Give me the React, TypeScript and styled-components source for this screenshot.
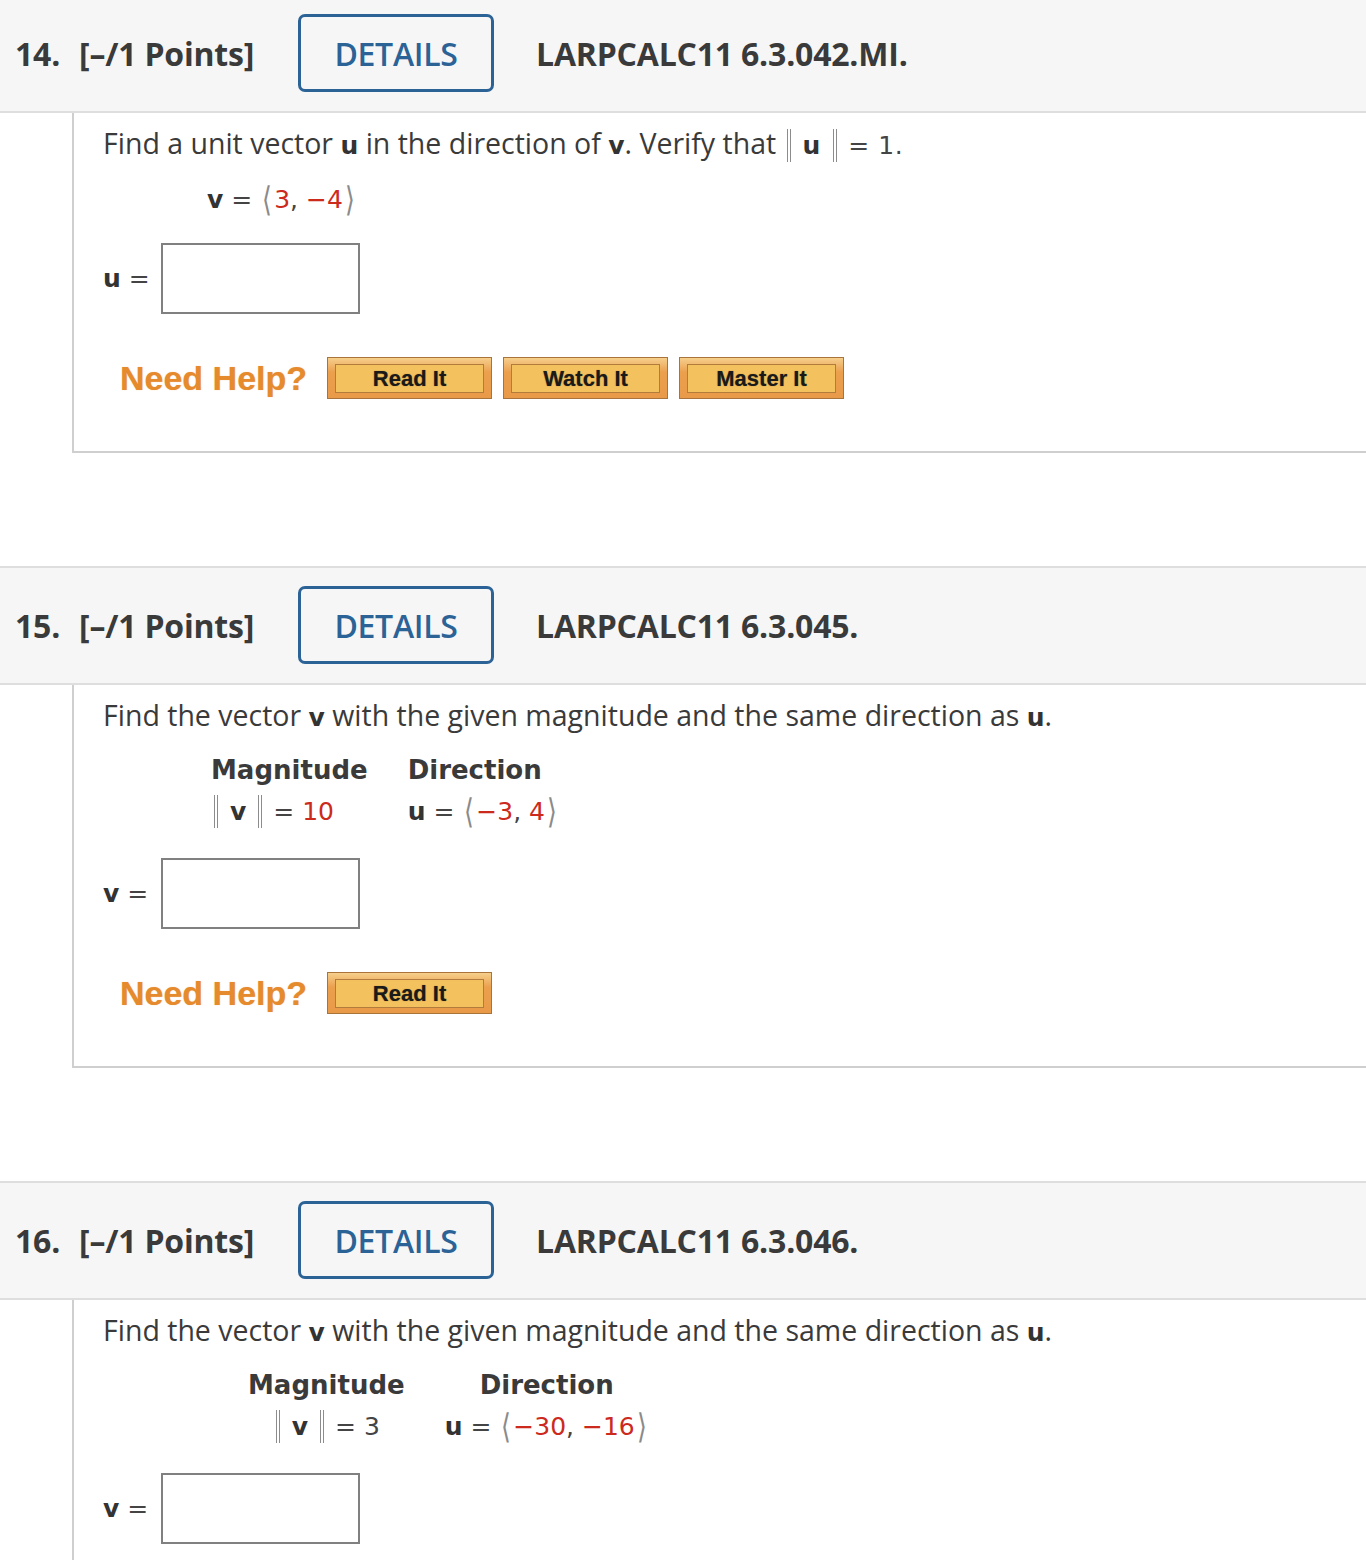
import React, { FC, ReactNode } from "react";
import styled, { createGlobalStyle } from "styled-components";

const GlobalStyle = createGlobalStyle`
  html, body {
    margin: 0;
    padding: 0;
    background: #ffffff;
    overflow: hidden;
  }
  body {
    font-family: "Open Sans", "DejaVu Sans", sans-serif;
    color: #3a3a3a;
  }
`;

interface HelpProps {
  buttons: string[];
}

const Vec: FC<{ children: ReactNode }> = ({ children }) => (
  <>
    <Angle>⟨</Angle>
    {children}
    <Angle>⟩</Angle>
  </>
);

const Help: FC<HelpProps> = ({ buttons }) => (
  <HelpRow>
    <NeedHelp>Need Help?</NeedHelp>
    {buttons.map((b) => (
      <HelpButton key={b}>
        <span>{b}</span>
      </HelpButton>
    ))}
  </HelpRow>
);

const QuestionHeader: FC<{ num: string; code: string }> = ({ num, code }) => (
  <Header>
    <Num>{num}</Num>
    <Points>[–/1 Points]</Points>
    <DetailsButton>DETAILS</DetailsButton>
    <Code>{code}</Code>
  </Header>
);

const App: FC = () => {
  return (
    <Page>
      <GlobalStyle />
      <Question>
        <QuestionHeader num="14." code="LARPCALC11 6.3.042.MI." />
        <Body>
          <Prompt>
            Find a unit vector <Var>u</Var> in the direction of <Var>v</Var>.
            Verify that{" "}
            <MathText>
              <Norm>
                <Var>u</Var>
              </Norm>{" "}
              = 1.
            </MathText>
          </Prompt>
          <VectorLine>
            <Var>v</Var> ={" "}
            <Vec>
              <Red>3</Red>, <Red>−4</Red>
            </Vec>
          </VectorLine>
          <AnswerRow gap={27}>
            <AnswerLabel>
              <Var>u</Var> =
            </AnswerLabel>
            <AnswerBox />
          </AnswerRow>
          <Help buttons={["Read It", "Watch It", "Master It"]} />
        </Body>
      </Question>

      <Question>
        <QuestionHeader num="15." code="LARPCALC11 6.3.045." />
        <Body>
          <Prompt>
            Find the vector <Var>v</Var> with the given magnitude and the same
            direction as <Var>u</Var>.
          </Prompt>
          <GivenTable indent={108} align="start">
            <ColHead>Magnitude</ColHead>
            <ColHead>Direction</ColHead>
            <Cell>
              <Norm>
                <Var>v</Var>
              </Norm>{" "}
              = <Red>10</Red>
            </Cell>
            <Cell>
              <Var>u</Var> ={" "}
              <Vec>
                <Red>−3</Red>, <Red>4</Red>
              </Vec>
            </Cell>
          </GivenTable>
          <AnswerRow gap={25}>
            <AnswerLabel>
              <Var>v</Var> =
            </AnswerLabel>
            <AnswerBox />
          </AnswerRow>
          <Help buttons={["Read It"]} />
        </Body>
      </Question>

      <Question>
        <QuestionHeader num="16." code="LARPCALC11 6.3.046." />
        <Body>
          <Prompt>
            Find the vector <Var>v</Var> with the given magnitude and the same
            direction as <Var>u</Var>.
          </Prompt>
          <GivenTable indent={145} align="center">
            <ColHead>Magnitude</ColHead>
            <ColHead>Direction</ColHead>
            <Cell>
              <Norm>
                <Var>v</Var>
              </Norm>{" "}
              = 3
            </Cell>
            <Cell>
              <Var>u</Var> ={" "}
              <Vec>
                <Red>−30</Red>, <Red>−16</Red>
              </Vec>
            </Cell>
          </GivenTable>
          <AnswerRow gap={25}>
            <AnswerLabel>
              <Var>v</Var> =
            </AnswerLabel>
            <AnswerBox />
          </AnswerRow>
          <Help buttons={["Read It"]} />
        </Body>
      </Question>
    </Page>
  );
};

const Page = styled.div`
  margin-top: -6px;
  width: 1366px;
`;
const Question = styled.section`
  margin-bottom: 113px;
`;
const Header = styled.div`
  display: flex;
  align-items: center;
  background: #f6f6f6;
  border-top: 2px solid #dedede;
  border-bottom: 2px solid #dedede;
  padding: 18px 0 19px 15px;
  font-family: "Open Sans", sans-serif;
  font-weight: 700;
  font-size: 32px;
  color: #3a3a3a;
  letter-spacing: -0.2px;
`;
const Num = styled.span`
  width: 64px;
`;
const Points = styled.span`
  width: 219px;
`;
const DetailsButton = styled.div`
  box-sizing: border-box;
  width: 196px;
  height: 78px;
  border: 3px solid #2c6397;
  border-radius: 7px;
  display: flex;
  align-items: center;
  justify-content: center;
  color: #2c6397;
  font-weight: 600;
  letter-spacing: -0.3px;
`;
const Code = styled.span`
  margin-left: 42px;
`;
const Body = styled.div`
  margin-left: 72px;
  border-left: 2px solid #cfcfcf;
  border-bottom: 2px solid #cfcfcf;
  padding: 15px 0 52px 29px;
`;
const Prompt = styled.div`
  font-size: 28.5px;
  line-height: 30px;
  color: #3a3a3a;
`;
const MathText = styled.span`
  font-family: "DejaVu Sans", Verdana, sans-serif;
  font-size: 25px;
  color: #444;
  letter-spacing: 0.5px;
`;
const Var = styled.b`
  font-family: "DejaVu Sans", Verdana, sans-serif;
  font-weight: 700;
  font-size: 25px;
  color: #333;
`;
const Red = styled.span`
  color: #cc2a1c;
`;
const Angle = styled.span`
  display: inline-block;
  color: #8a8a8a;
  font-family: "DejaVu Sans", sans-serif;
  font-weight: 300;
  transform: scaleY(1.35);
  margin: 0 2px;
`;
const Norm = styled.span`
  border-left: 4px double #8c8c8c;
  border-right: 4px double #8c8c8c;
  padding: 2px 12px;
  margin: 0 3px;
`;
const VectorLine = styled.div`
  margin-top: 23px;
  padding-left: 104px;
  font-family: "DejaVu Sans", Verdana, sans-serif;
  font-size: 25px;
  line-height: 32px;
  color: #444;
`;
const GivenTable = styled.div<{ indent: number; align: string }>`
  display: grid;
  grid-template-columns: auto auto;
  justify-content: start;
  justify-items: ${(p) => p.align};
  column-gap: 40px;
  margin: 16px 0 0 ${(p) => p.indent}px;
  font-family: "DejaVu Sans", Verdana, sans-serif;
  font-size: 25px;
  line-height: 42px;
  color: #444;
`;
const ColHead = styled.div`
  font-weight: 700;
  font-size: 26px;
  color: #3a3a3a;
`;
const Cell = styled.div``;
const AnswerRow = styled.div<{ gap: number }>`
  display: flex;
  align-items: center;
  margin-top: ${(p) => p.gap}px;
`;
const AnswerLabel = styled.span`
  width: 58px;
  font-family: "DejaVu Sans", Verdana, sans-serif;
  font-size: 25px;
  color: #444;
`;
const AnswerBox = styled.div`
  box-sizing: border-box;
  width: 199px;
  height: 71px;
  border: 2px solid #808080;
  background: #fff;
`;
const HelpRow = styled.div`
  display: flex;
  align-items: center;
  gap: 11px;
  margin-top: 43px;
  padding-left: 17px;
`;
const NeedHelp = styled.span`
  font-family: "Liberation Sans", Arial, sans-serif;
  font-weight: 700;
  font-size: 34px;
  color: #e68a2e;
  margin-right: 9px;
  text-shadow: 0 0 1px rgba(230, 138, 46, 0.6);
`;
const HelpButton = styled.div`
  box-sizing: border-box;
  width: 165px;
  height: 42px;
  padding: 6px 7px 5px 7px;
  border: 1.5px solid #a8743a;
  background: linear-gradient(#f6cf8c 0%, #eba04e 35%, #e99a48 100%);
  & > span {
    box-sizing: border-box;
    display: flex;
    align-items: center;
    justify-content: center;
    height: 100%;
    border: 1.5px solid #b27c3c;
    background: #f3c15d;
    font-family: "Liberation Sans", Arial, sans-serif;
    font-weight: 700;
    font-size: 22px;
    color: #1a1a1a;
    text-shadow: 0 0 1px rgba(0, 0, 0, 0.45);
  }
`;

export default App;
